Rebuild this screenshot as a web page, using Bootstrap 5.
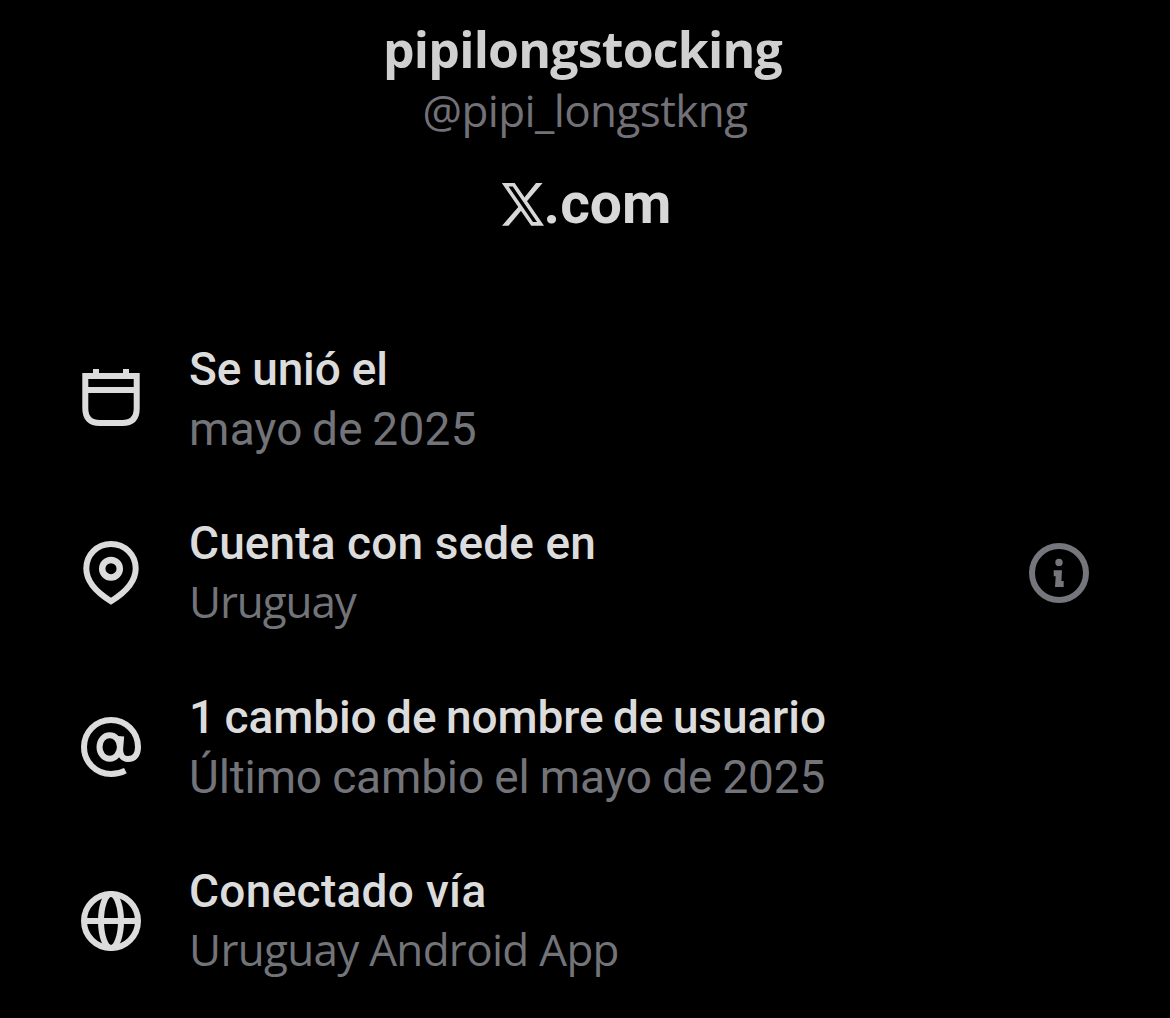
<!DOCTYPE html>
<html lang="es">
<head>
<meta charset="utf-8">
<meta name="viewport" content="width=device-width, initial-scale=1">
<title>Información de la cuenta</title>
<link href="https://cdn.jsdelivr.net/npm/bootstrap@5.3.0/dist/css/bootstrap.min.css" rel="stylesheet">
<style>
body { background: #000; color: #dcdcdc; font-family: Roboto, "Liberation Sans", sans-serif; overflow: hidden; }
.account-head { padding-top: 19px; line-height: 60px; white-space: nowrap; }
.display-name { font: 700 50px/60px "Open Sans", sans-serif; letter-spacing: -.8px; color: #d0d0d0; margin: 0; padding-right: 5px; }
.handle { font: 400 44px/60px "Open Sans", sans-serif; letter-spacing: -.6px; color: #727177; margin-top: 1px; }
.domain { margin-top: 34px; height: 60px; padding-left: 3px; font: 700 57px/60px Roboto, sans-serif; color: #d8d8d8; }
.domain svg { margin-top: 9px; }
.facts { margin-top: 105px; padding: 0 81px; gap: 54px; }
.fact { height: 122px; margin-bottom: -2px; white-space: nowrap; }
.fact-text { margin-left: 48px; font-size: 46px; line-height: 60px; }
.fact-title { font-weight: 500; }
.fact-sub { color: #737479; }
.fact-place { font: 400 44px/57px "Open Sans", sans-serif; }
.ic { fill: none; stroke: currentColor; stroke-width: 6; flex: none; }
.info-btn { color: #75767b; }
</style>
</head>
<body>
<header class="account-head d-flex flex-column align-items-center">
  <h1 class="display-name">pipilongstocking</h1>
  <div class="handle">@pipi_longstkng</div>
  <div class="domain d-flex align-items-start">
    <svg width="42" height="43" viewBox="0 0 42 43" fill="none" stroke="currentColor"><path d="M3.200 1.800H11.700L38.600 40.900H30.200Z" stroke-width="3.600"/><path fill="currentColor" stroke="none" d="M34 0H40.600L24.300 19L21.800 15.300ZM0 42.700H6.500L19.700 27L17.200 23Z"/></svg><span>.com</span>
  </div>
</header>
<main class="facts d-flex flex-column">
  <section class="fact d-flex align-items-center">
    <svg class="ic" width="60" height="68" viewBox="0 0 60 68"><path d="M4.300 10H55.700V42.500Q55.700 57 41.200 57H18.800Q4.300 57 4.300 42.500ZM4.300 24H55.700M15 3V10M45 3V10"/></svg>
    <div class="fact-text align-self-start"><div class="fact-title" style="letter-spacing:-.2px">Se unió el</div><div class="fact-sub" style="letter-spacing:.3px;word-spacing:-2.500px">mayo de 2025</div></div>
  </section>
  <section class="fact d-flex align-items-center">
    <svg class="ic" width="60" height="68" viewBox="0 0 60 68"><path d="M30 4C16 4 5.300 15 5.300 28.500C5.300 42 15 52 30 61.200C45 52 54.700 42 54.700 28.500C54.700 15 44 4 30 4Z"/><circle cx="30" cy="28.700" r="8.800" stroke-width="6.500"/></svg>
    <div class="fact-text align-self-start"><div class="fact-title" style="letter-spacing:.1px">Cuenta con sede en</div><div class="fact-sub fact-place" style="letter-spacing:-1.100px">Uruguay</div></div>
    <svg class="ic info-btn ms-auto" width="60" height="68" viewBox="0 0 60 68"><circle cx="30" cy="33" r="27"/><g fill="currentColor" stroke="none"><circle cx="30" cy="22.400" r="3.700"/><path d="M24.700 30.300H33L32.400 41H34.700V47H26L26.700 36.200H24.700Z"/></g></svg>
  </section>
  <section class="fact d-flex align-items-center">
    <svg class="ic" width="60" height="68" viewBox="0 0 60 68"><path d="M40.200 22.300L39.200 34C38.600 41 41.500 45 47 45C53.500 45 57 40.500 57 33C57 18 45 6 30 6C15 6 3 18 3 33C3 48 15 60 30 60C35.500 60 40 58.800 44.400 56.600"/><ellipse cx="28.700" cy="33" rx="10.200" ry="11.800"/></svg>
    <div class="fact-text align-self-start"><div class="fact-title" style="letter-spacing:-.1px;word-spacing:-1.800px">1 cambio de nombre de usuario</div><div class="fact-sub" style="letter-spacing:-.15px;word-spacing:-1px">Último cambio el mayo de 2025</div></div>
  </section>
  <section class="fact d-flex align-items-center">
    <svg class="ic" width="60" height="68" viewBox="0 0 60 68"><circle cx="30" cy="33" r="27"/><ellipse cx="30" cy="33" rx="10" ry="27"/><path d="M3 33H57"/></svg>
    <div class="fact-text align-self-start"><div class="fact-title" style="letter-spacing:.3px">Conectado vía</div><div class="fact-sub fact-place" style="letter-spacing:-.7px">Uruguay Android App</div></div>
  </section>
</main>
<script src="https://cdn.jsdelivr.net/npm/bootstrap@5.3.0/dist/js/bootstrap.bundle.min.js"></script>
</body>
</html>
